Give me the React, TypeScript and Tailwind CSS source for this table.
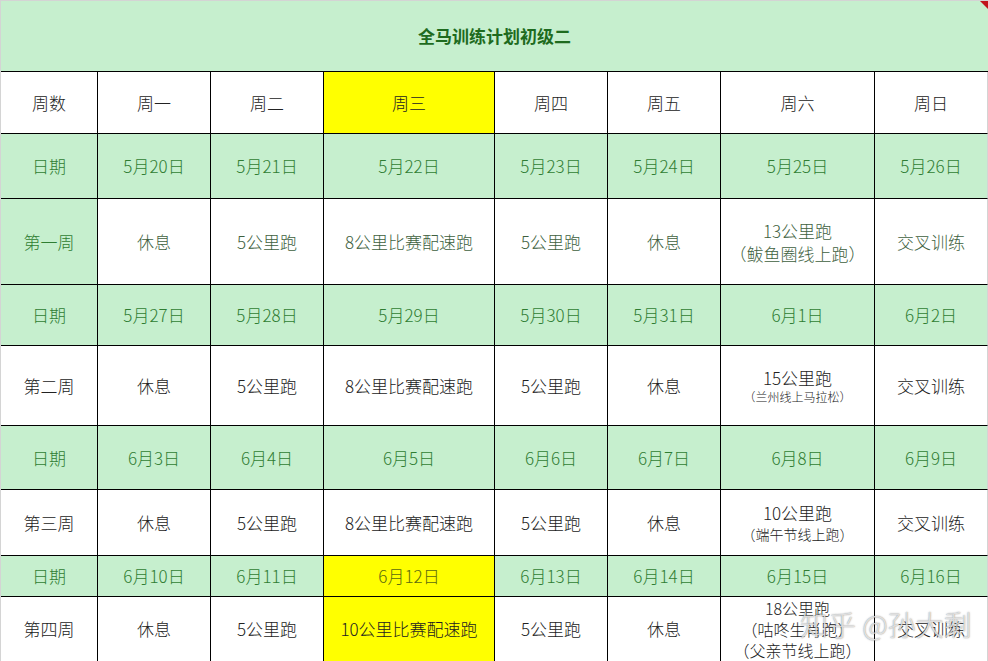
import React from "react"

const cols = "grid-cols-[97px_113px_113px_171px_113px_113px_154px_113px]"

type Cell = {
  text: React.ReactNode
  bg?: "green" | "white" | "yellow"
  color?: string
}

const G = "#2f7d32"
const W1 = "#3e5f3e"
const K = "#222222"

const green = (t: string, color = G): Cell => ({ text: t, bg: "green", color })
const white = (t: React.ReactNode, color = K): Cell => ({ text: t, bg: "white", color })
const yellow = (t: string, color = K): Cell => ({ text: t, bg: "yellow", color })

function Two({ a, b, sub }: { a: string; b: string; sub?: string }) {
  return (
    <div className="flex flex-col items-center leading-[23px]">
      <span>{a}</span>
      <span className={sub}>{b}</span>
    </div>
  )
}

const rows: { h: string; cells: Cell[] }[] = [
  {
    h: "h-[62px]",
    cells: [
      white("周数"),
      white("周一"),
      white("周二"),
      yellow("周三"),
      white("周四"),
      white("周五"),
      white("周六"),
      white("周日"),
    ],
  },
  {
    h: "h-[65px]",
    cells: ["日期", "5月20日", "5月21日", "5月22日", "5月23日", "5月24日", "5月25日", "5月26日"].map((t) => green(t)),
  },
  {
    h: "h-[86px]",
    cells: [
      green("第一周"),
      white("休息", W1),
      white("5公里跑", W1),
      white("8公里比赛配速跑", W1),
      white("5公里跑", W1),
      white("休息", W1),
      white(<Two a="13公里跑" b="（鲅鱼圈线上跑）" />, W1),
      white("交叉训练", W1),
    ],
  },
  {
    h: "h-[61px]",
    cells: ["日期", "5月27日", "5月28日", "5月29日", "5月30日", "5月31日", "6月1日", "6月2日"].map((t) => green(t)),
  },
  {
    h: "h-[80px]",
    cells: [
      white("第二周"),
      white("休息"),
      white("5公里跑"),
      white("8公里比赛配速跑"),
      white("5公里跑"),
      white("休息"),
      white(<Two a="15公里跑" b="（兰州线上马拉松）" sub="text-[12px] leading-[16px]" />),
      white("交叉训练"),
    ],
  },
  {
    h: "h-[64px]",
    cells: ["日期", "6月3日", "6月4日", "6月5日", "6月6日", "6月7日", "6月8日", "6月9日"].map((t) => green(t)),
  },
  {
    h: "h-[66px]",
    cells: [
      white("第三周"),
      white("休息"),
      white("5公里跑"),
      white("8公里比赛配速跑"),
      white("5公里跑"),
      white("休息"),
      white(<Two a="10公里跑" b="（端午节线上跑）" sub="text-[14px] leading-[20px]" />),
      white("交叉训练"),
    ],
  },
  {
    h: "h-[41px]",
    cells: [
      green("日期"),
      green("6月10日"),
      green("6月11日"),
      yellow("6月12日", "#5b6a10"),
      green("6月13日"),
      green("6月14日"),
      green("6月15日"),
      green("6月16日"),
    ],
  },
  {
    h: "h-[65px]",
    cells: [
      white("第四周"),
      white("休息"),
      white("5公里跑"),
      yellow("10公里比赛配速跑"),
      white("5公里跑"),
      white("休息"),
      white(
        <div className="flex flex-col items-center leading-[21px] text-[16px]">
          <span>18公里跑</span>
          <span>（咕咚生肖跑）</span>
          <span>（父亲节线上跑）</span>
        </div>
      ),
      white("交叉训练"),
    ],
  },
]

const bgClass = {
  green: "bg-[#c6efce]",
  white: "bg-white",
  yellow: "bg-[#ffff00]",
}

export default function App() {
  return (
    <div
      className="relative w-[988px] h-[661px] overflow-hidden bg-white text-[17px] font-light"
      style={{ fontFamily: '"Noto Sans CJK SC", "Noto Sans", sans-serif' }}
    >
      <div className="border-l border-t border-[#d4d4d4]">
        <div className="h-[71px] bg-[#c6efce] border-b border-black flex items-center justify-center relative">
          <span className="font-bold text-[#1e6b1e] text-[17px]">全马训练计划初级二</span>
          <div className="absolute right-0 top-0 w-0 h-0 border-t-[8px] border-l-[8px] border-t-[#c0141c] border-l-transparent" />
        </div>
        {rows.map((r, i) => (
          <div key={i} className={`grid ${cols} ${r.h}`}>
            {r.cells.map((c, j) => (
              <div
                key={j}
                className={`flex items-center justify-center text-center whitespace-nowrap border-b border-black ${
                  j < 7 ? "border-r" : "border-r border-r-[#d4d4d4]"
                } ${bgClass[c.bg ?? "white"]} overflow-visible`}
                style={{ color: c.color }}
              >
                {c.text}
              </div>
            ))}
          </div>
        ))}
      </div>
      <div
        className="absolute left-[800px] top-[606px] text-[28px] leading-[36px] whitespace-nowrap text-white/70 pointer-events-none"
        style={{ textShadow: "0 0 1px rgba(90,90,90,0.6), 0 0 2px rgba(90,90,90,0.35)" }}
      >
        知乎 @孙大剩
      </div>
    </div>
  )
}
